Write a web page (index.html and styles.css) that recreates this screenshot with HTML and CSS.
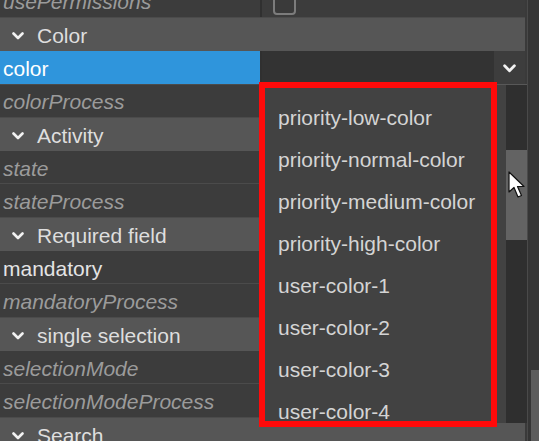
FILE: index.html
```html
<!DOCTYPE html>
<html lang="en">
<head>
  <meta charset="UTF-8" />
  <title>Properties</title>
  <link rel="stylesheet" href="styles.css">
</head>
<body>
  <div class="panel">
    <div class="grid">
      <div class="rows">
        <div class="row prop">
          <div class="name dim">usePermissions</div>
          <div class="value"><span class="check"></span></div>
        </div>
        <div class="row cat"><svg class="chev" viewBox="0 0 12 8"><polyline points="1.5,1.5 6,6 10.5,1.5"/></svg>Color</div>
        <div class="row prop">
          <div class="name selected">color</div>
          <div class="value combo">
            <span class="combo-btn"><svg class="chev" viewBox="0 0 12 8"><polyline points="1.5,1.5 6,6 10.5,1.5"/></svg></span>
          </div>
        </div>
        <div class="row prop"><div class="name dim">colorProcess</div><div class="value"></div></div>
        <div class="row cat"><svg class="chev" viewBox="0 0 12 8"><polyline points="1.5,1.5 6,6 10.5,1.5"/></svg>Activity</div>
        <div class="row prop"><div class="name dim">state</div><div class="value"></div></div>
        <div class="row prop"><div class="name dim">stateProcess</div><div class="value"></div></div>
        <div class="row cat"><svg class="chev" viewBox="0 0 12 8"><polyline points="1.5,1.5 6,6 10.5,1.5"/></svg>Required field</div>
        <div class="row prop"><div class="name">mandatory</div><div class="value"></div></div>
        <div class="row prop"><div class="name dim">mandatoryProcess</div><div class="value"></div></div>
        <div class="row cat"><svg class="chev" viewBox="0 0 12 8"><polyline points="1.5,1.5 6,6 10.5,1.5"/></svg>single selection</div>
        <div class="row prop"><div class="name dim">selectionMode</div><div class="value"></div></div>
        <div class="row prop"><div class="name dim">selectionModeProcess</div><div class="value"></div></div>
        <div class="row cat"><svg class="chev" viewBox="0 0 12 8"><polyline points="1.5,1.5 6,6 10.5,1.5"/></svg>Search</div>
      </div>

      <!-- open dropdown of the color combo -->
      <div class="popup">
        <ul class="options">
          <li>priority-low-color</li>
          <li>priority-normal-color</li>
          <li>priority-medium-color</li>
          <li>priority-high-color</li>
          <li>user-color-1</li>
          <li>user-color-2</li>
          <li>user-color-3</li>
          <li>user-color-4</li>
        </ul>
        <div class="track"><div class="thumb"></div></div>
      </div>
      <div class="mark"></div>
    </div>
    <div class="vscroll"><div class="vthumb"></div></div>
    <svg class="cursor" viewBox="0 0 18 28"><path d="M1 1 L1 21 L6 16.5 L10 26 L13.5 24.5 L9.5 15.5 L16 15.5 Z"/></svg>
  </div>
</body>
</html>
```

FILE: styles.css
```css
html, body { margin: 0; padding: 0; }
body { background: #3a3a3a; font-family: "Liberation Sans", Arial, sans-serif; font-size: 21px; overflow: hidden; }

.panel { position: relative; display: flex; height: 441px; }
.grid { position: relative; width: 527px; height: 441px; overflow: hidden; }
.rows { margin-top: -15.3px; margin-right: 2px; }

.row { display: flex; align-items: center; height: 33.3px; box-sizing: border-box; }
.prop { background: #3c3c3c; border-bottom: 1px solid #4b4b4b; align-items: stretch; }
.cat { background: #565656; color: #dedede; padding: 3px 0 0 12px; gap: 13px; }
.cat .chev { width: 12px; height: 8px; }
.chev polyline { fill: none; stroke: #f2f2f2; stroke-width: 2.6; stroke-linecap: round; stroke-linejoin: round; }

.name { width: 262px; flex: none; display: flex; align-items: center; padding: 3px 0 0 3px; box-sizing: border-box; color: #e4e4e4; border-right: 2px solid #303030; white-space: nowrap; }
.name.dim { color: #9b9b9b; font-style: italic; }
.name.selected { background: #2f95dc; color: #fff; }
.value { flex: 1; display: flex; align-items: center; }

.check { width: 23px; height: 23px; margin: 6px 0 0 11px; box-sizing: border-box; border: 2px solid #7c7c7c; border-radius: 4px; background: #3a3a3a; }

.combo { background: #333; justify-content: flex-end; }
.combo-btn { width: 31px; align-self: stretch; display: flex; align-items: center; justify-content: center; background: #3d3d3d; }
.combo-btn .chev { width: 13px; height: 9px; margin-top: 2px; }

.popup { position: absolute; left: 262px; top: 84px; width: 265px; height: 339px; display: flex; background: #424242; border-top: 1px solid #585858; border-left: 1px solid #585858; box-sizing: border-box; }
.options { list-style: none; margin: 0; padding: 12px 0 0 15px; flex: 1; overflow: hidden; }
.options li { height: 42px; line-height: 42px; color: #d4d4d4; white-space: nowrap; }
.track { width: 21px; background: #2f2f2f; }
.thumb { margin-top: 65px; height: 90px; background: #636363; }

.mark { position: absolute; left: 259px; top: 82px; width: 238px; height: 345px; box-sizing: border-box; border: 6px solid #ff0a0a; }

.cursor { position: absolute; left: 508px; top: 171px; width: 18px; height: 28px; }
.cursor path { fill: #fff; stroke: #111; stroke-width: 1.2; stroke-linejoin: round; }

.vscroll { width: 12px; border-left: 1px solid #4a4a4a; background: #353535; padding-left: 3px; box-sizing: border-box; }
.vthumb { margin-top: 370px; height: 80px; background: #5c5c5c; }
```
